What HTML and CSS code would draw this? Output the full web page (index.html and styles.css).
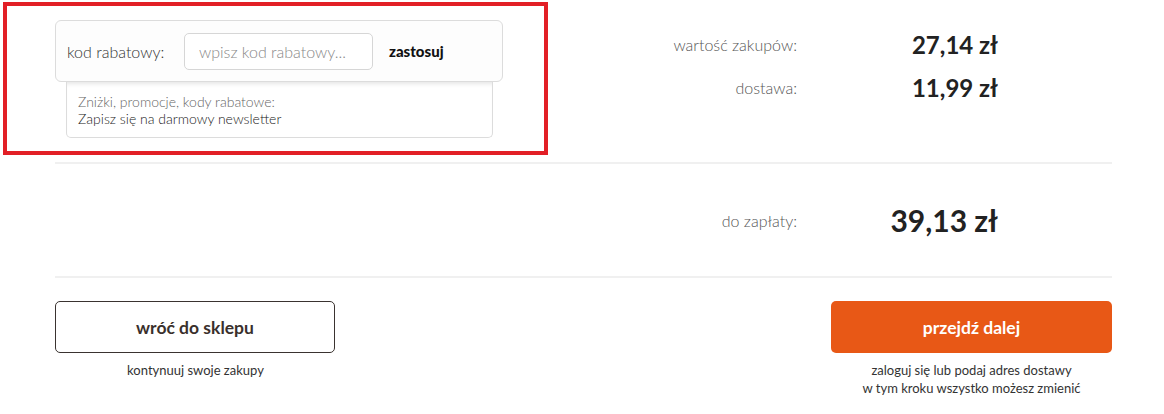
FILE: index.html
```html
<!DOCTYPE html>
<html lang="pl">
<head>
<meta charset="utf-8">
<title>Koszyk</title>
<link rel="stylesheet" href="styles.css">
</head>
<body>
<div class="page">
  <div class="top">
    <div class="promo-frame">
      <div class="coupon">
        <span class="coupon-label">kod rabatowy:</span>
        <input class="coupon-input" type="text" placeholder="wpisz kod rabatowy...">
        <span class="coupon-apply">zastosuj</span>
      </div>
      <div class="newsletter">
        <div class="nl-muted">Zniżki, promocje, kody rabatowe:</div>
        <div class="nl-link">Zapisz się na darmowy newsletter</div>
      </div>
    </div>
    <div class="totals">
      <div class="row">
        <span class="label">wartość zakupów:</span>
        <span class="value">27,14 zł</span>
      </div>
      <div class="row">
        <span class="label">dostawa:</span>
        <span class="value">11,99 zł</span>
      </div>
    </div>
  </div>
  <div class="inner">
    <div class="divider"></div>
    <div class="grand">
      <span class="label grand-label">do zapłaty:</span>
      <span class="value grand-value">39,13 zł</span>
    </div>
    <div class="divider"></div>
    <div class="actions">
      <div class="action">
        <a class="btn btn-outline">wróć do sklepu</a>
        <p class="caption">kontynuuj swoje zakupy</p>
      </div>
      <div class="action">
        <a class="btn btn-primary">przejdź dalej</a>
        <p class="caption">zaloguj się lub podaj adres dostawy<br>w tym kroku wszystko możesz zmienić</p>
      </div>
    </div>
  </div>
</div>
</body>
</html>
```

FILE: styles.css
```css
* { box-sizing: border-box; }
html, body { margin: 0; padding: 0; background: #fff; }
body {
  font-family: Lato, "Open Sans", "Liberation Sans", sans-serif;
  color: #333;
  width: 1164px;
  height: 414px;
  overflow: hidden;
}
.top {
  display: flex;
  height: 162px;
}
.promo-frame {
  margin: 2px 0 0 3px;
  width: 545px;
  height: 153px;
  border: 4px solid #e21f26;
  padding: 14px 0 0 48px;
}
.coupon {
  width: 448px;
  height: 62px;
  border: 1px solid #dcdcdc;
  border-radius: 6px;
  background: #fdfdfd;
  display: flex;
  align-items: center;
  padding-left: 11px;
  position: relative;
  z-index: 1;
}
.coupon-label {
  font-size: 16px;
  font-weight: 300;
  color: #333;
  width: 117px;
}
.coupon-input {
  width: 189px;
  height: 37px;
  border: 1px solid #d6d6d6;
  border-radius: 5px;
  background: #fff;
  padding: 0 0 0 14px;
  font-family: inherit;
  font-size: 16px;
  font-weight: 300;
  color: #333;
  outline: none;
}
.coupon-input::placeholder { color: #888; }
.coupon-apply {
  margin-left: 16px;
  font-size: 15px;
  font-weight: 900;
  color: #111;
}
.newsletter {
  margin-left: 11px;
  width: 427px;
  height: 56px;
  border: 1px solid #dcdcdc;
  border-top: none;
  border-radius: 0 0 5px 5px;
  box-shadow: inset 0 5px 4px -3px #e6e6e6;
  padding: 11px 0 0 11px;
  font-size: 14px;
  line-height: 17px;
  font-weight: 300;
}
.nl-muted { color: #666; }
.nl-link { color: #222; }

.totals {
  display: flex;
  flex-direction: column;
  padding-top: 26px;
  gap: 7px;
}
.row {
  display: flex;
  align-items: center;
  height: 36px;
}
.label {
  font-size: 16px;
  font-weight: 300;
  color: #555;
  text-align: right;
}
.totals .label { width: 249px; }
.value {
  font-weight: 700;
  color: #222;
  text-align: right;
  width: 201px;
  font-size: 24px;
}
.inner {
  margin-left: 55px;
  width: 1057px;
}
.divider {
  height: 2px;
  background: #f0f0f0;
}
.grand {
  display: flex;
  align-items: center;
  height: 112px;
}
.grand-label { width: 742px; }
.grand-value { font-size: 30px; }
.actions {
  display: flex;
  justify-content: space-between;
  padding-top: 23px;
}
.action {
  width: 281px;
  text-align: center;
}
.btn {
  display: flex;
  align-items: center;
  justify-content: center;
  height: 52px;
  border-radius: 5px;
  font-size: 17.5px;
  font-weight: 700;
  text-decoration: none;
}
.btn-outline {
  border: 1px solid #3a3330;
  color: #3a302c;
  width: 280px;
}
.btn-primary {
  background: #e85816;
  color: #fff;
}
.caption {
  margin: 8px 0 0;
  font-size: 13px;
  line-height: 18px;
  color: #333;
}
```
